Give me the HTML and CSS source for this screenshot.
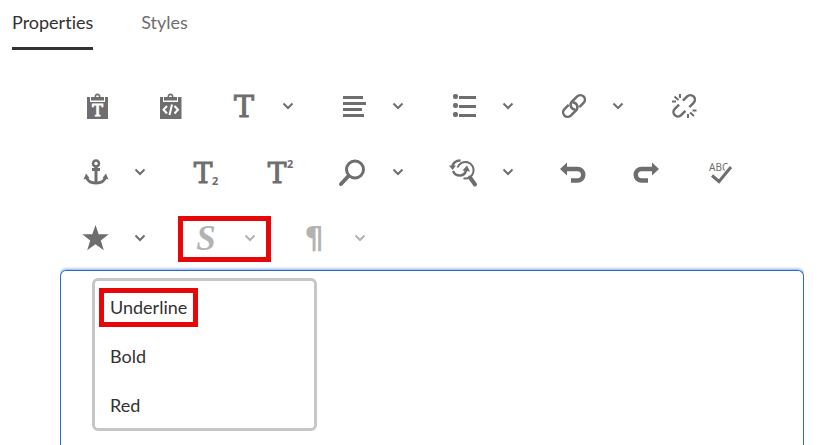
FILE: index.html
```html
<!DOCTYPE html>
<html lang="en">
<head>
  <meta charset="UTF-8">
  <meta name="viewport" content="width=device-width, initial-scale=1.0">
  <title>Text Editor</title>
  <link rel="stylesheet" href="styles.css">
</head>
<body>
  <nav class="tabs">
    <a class="tab active" href="#properties">Properties</a>
    <a class="tab" href="#styles">Styles</a>
  </nav>

  <main class="panel">
    <div class="toolbar">
      <div class="row">
        <button class="tool" aria-label="Paste as text">
          <svg class="icon" viewBox="0 0 28 28">
            <path fill="currentColor" d="M4 5h3v5h15V5h3v22H4z"/>
            <path fill="currentColor" d="M8 5h3.500a3 3.500 0 0 1 6 0H21v3.500H8zM13 5h3a1.500 1.800 0 0 0-3 0z"/>
            <text class="slab small" x="14.500" y="24">T</text>
          </svg>
        </button>
        <button class="tool" aria-label="Paste from code">
          <svg class="icon" viewBox="0 0 28 28">
            <path fill="currentColor" d="M3 5h3v5h15V5h3.500v22H3z"/>
            <path fill="currentColor" d="M7 5h3.500a3 3.500 0 0 1 6 0H20v3.500H7zM12 5h3a1.500 1.800 0 0 0-3 0z"/>
            <path class="cut" d="M10 14l-3.500 3.700L10 21.500M17.500 14l3.500 3.700-3.500 3.800M15 12.500l-2.500 10.500"/>
          </svg>
        </button>
        <button class="tool" aria-label="Format">
          <svg class="icon" viewBox="0 0 28 28"><text class="slab wide" x="13" y="25">T</text></svg>
          <svg class="chevron" viewBox="0 0 12 12"><path d="M1.500 3.500L6 8l4.500-4.500"/></svg>
        </button>
        <button class="tool" aria-label="Alignment">
          <svg class="icon" viewBox="0 0 28 28"><path fill="currentColor" d="M2 4h20v3H2zM2 10h23v3H2zM2 16h19v3H2zM2 22h21v3H2z"/></svg>
          <svg class="chevron" viewBox="0 0 12 12"><path d="M1.500 3.500L6 8l4.500-4.500"/></svg>
        </button>
        <button class="tool" aria-label="Lists">
          <svg class="icon" viewBox="0 0 28 28">
            <path fill="currentColor" d="M8 4h17v3H8zM8 13h17v3H8zM8 22h17v3H8z"/>
            <g fill="currentColor">
              <rect x="2" y="2" width="5" height="5" rx="2"/>
              <rect x="2" y="11" width="5" height="5" rx="2"/>
              <rect x="2" y="20" width="5" height="5" rx="2"/>
            </g>
          </svg>
          <svg class="chevron" viewBox="0 0 12 12"><path d="M1.500 3.500L6 8l4.500-4.500"/></svg>
        </button>
        <button class="tool" aria-label="Link">
          <svg class="icon" viewBox="0 0 28 28">
            <g class="line" transform="rotate(-45 13 14)">
              <path d="M10 9.500H4a4.500 4.500 0 0 0 0 9h7.500a4.500 4.500 0 0 0 3-7.800"/>
              <path d="M16 18.500h6a4.500 4.500 0 0 0 0-9h-7.500a4.500 4.500 0 0 0-3 7.800"/>
            </g>
          </svg>
          <svg class="chevron" viewBox="0 0 12 12"><path d="M1.500 3.500L6 8l4.500-4.500"/></svg>
        </button>
        <button class="tool" aria-label="Unlink">
          <svg class="icon" viewBox="0 0 28 28">
            <g class="line" transform="rotate(-45 13 14)">
              <path d="M10.500 9.500H4.500a4.500 4.500 0 0 0 0 9H10.500M16 18.500h6a4.500 4.500 0 0 0 0-9h-6"/>
            </g>
            <path class="line thin" d="M9 2v4M1 9.500h4M3.500 4.500L7.500 8M17 26v-4M25.500 18.500h-4M23 24l-4-3.500"/>
          </svg>
        </button>
      </div>

      <div class="row">
        <button class="tool" aria-label="Anchor">
          <svg class="icon" viewBox="0 0 28 28">
            <circle class="line" cx="13" cy="5.500" r="3"/>
            <path class="line bold" d="M13 9v15M9 11.500h8"/>
            <path class="line bold" d="M3.500 19c1 4 5 6 9.500 6s8.500-2 9.500-6"/>
            <path fill="currentColor" d="M3 15.500l-2.500 6 6-1.500zM23 15.500l2.500 6-6-1.500z"/>
          </svg>
          <svg class="chevron" viewBox="0 0 12 12"><path d="M1.500 3.500L6 8l4.500-4.500"/></svg>
        </button>
        <button class="tool" aria-label="Subscript">
          <svg class="icon" viewBox="0 0 28 28"><text class="slab" x="10" y="25">T</text><text class="digit" x="19" y="27">2</text></svg>
        </button>
        <button class="tool" aria-label="Superscript">
          <svg class="icon" viewBox="0 0 28 28"><text class="slab" x="10" y="25">T</text><text class="digit" x="20" y="10">2</text></svg>
        </button>
        <button class="tool" aria-label="Find">
          <svg class="icon" viewBox="0 0 28 28">
            <circle class="line bold" cx="14" cy="11.500" r="8.500"/>
            <path class="line heavy" d="M7.500 18L0 26"/>
          </svg>
          <svg class="chevron" viewBox="0 0 12 12"><path d="M1.500 3.500L6 8l4.500-4.500"/></svg>
        </button>
        <button class="tool" aria-label="Replace">
          <svg class="icon" viewBox="0 0 28 28">
            <path class="line thin" d="M6.500 9.500a8.300 8.300 0 1 1 6 10.800"/>
            <path class="line heavy" d="M19 19.500l5 7"/>
            <path class="line" d="M9.500 2.500C5 2.500 2 4.500 1.500 9M2 13c3 6.500 12 6 13-1"/>
            <path fill="currentColor" d="M-2 7.500h7L1.500 12zM11.500 12.500l4.500-5 3 6z"/>
          </svg>
          <svg class="chevron" viewBox="0 0 12 12"><path d="M1.500 3.500L6 8l4.500-4.500"/></svg>
        </button>
        <button class="tool" aria-label="Undo">
          <svg class="icon" viewBox="0 0 28 28">
            <path fill="none" stroke="currentColor" stroke-width="4.500" d="M5 11h11.500a5.500 5.500 0 0 1 0 11.500H10"/>
            <path fill="currentColor" d="M-1 11l7-6.500v13z"/>
          </svg>
        </button>
        <button class="tool" aria-label="Redo">
          <svg class="icon" viewBox="0 0 28 28">
            <path fill="none" stroke="currentColor" stroke-width="4.500" d="M18 11H6.500a5.500 5.500 0 0 0 0 11.500H13"/>
            <path fill="currentColor" d="M24 11l-7-6.500v13z"/>
          </svg>
        </button>
        <button class="tool" aria-label="Check spelling">
          <svg class="icon" viewBox="0 0 28 28">
            <text class="abc" x="0" y="13">ABC</text>
            <path fill="none" stroke="#fff" stroke-width="5" d="M10 23L21.500 9.500"/>
            <path class="line bold" d="M3 17.500l7 6L22 9"/>
          </svg>
        </button>
      </div>

      <div class="row">
        <button class="tool" aria-label="Favorites">
          <svg class="icon" viewBox="0 0 28 28"><path fill="currentColor" d="M12.500 1l3.200 9.200h10L17.800 16.500l3 9.800-8.300-6-8.300 6 3-9.800L-.7 10.200h10z"/></svg>
          <svg class="chevron" viewBox="0 0 12 12"><path d="M1.500 3.500L6 8l4.500-4.500"/></svg>
        </button>
        <button class="tool muted marked" aria-label="Text styles">
          <svg class="icon" viewBox="0 0 28 28"><text class="script" x="13" y="26">S</text></svg>
          <svg class="chevron" viewBox="0 0 12 12"><path d="M1.500 3.500L6 8l4.500-4.500"/></svg>
        </button>
        <button class="tool muted" aria-label="Paragraph">
          <svg class="icon" viewBox="0 0 28 28"><text class="pilcrow" x="11" y="24">¶</text></svg>
          <svg class="chevron" viewBox="0 0 12 12"><path d="M1.500 3.500L6 8l4.500-4.500"/></svg>
        </button>
      </div>
    </div>

    <div class="editor" role="textbox" aria-label="Text">
      <div class="menu">
        <button class="item"><span class="boxed">Underline</span></button>
        <button class="item"><span>Bold</span></button>
        <button class="item"><span>Red</span></button>
      </div>
    </div>
  </main>
</body>
</html>
```
FILE: styles.css
```css
* { box-sizing: border-box; }

body {
  display: flex;
  flex-direction: column;
  min-height: 100vh;
  margin: 0;
  background: #fff;
  color: #323232;
  font-family: Lato, "Noto Sans", sans-serif;
  font-size: 18px;
  font-variant-ligatures: none;
  line-height: 24px;
}

button {
  border: 0;
  padding: 0;
  background: none;
  color: inherit;
  font: inherit;
  cursor: pointer;
}

/* Tabs */
.tabs {
  display: flex;
  gap: 48px;
  padding: 0 12px;
}
.tab {
  padding: 10px 0 13px;
  border-bottom: 3px solid transparent;
  color: #6e6e6e;
  text-decoration: none;
}
.tab.active {
  border-color: #323232;
  color: #323232;
}

.panel {
  display: flex;
  flex: 1;
  flex-direction: column;
  padding: 34px 28px 0 60px;
}

/* Toolbar */
.toolbar {
  display: flex;
  flex-direction: column;
  gap: 22px;
  padding-bottom: 10px;
}
.row { display: flex; }
.tool {
  display: flex;
  align-items: center;
  gap: 23px;
  height: 44px;
  padding: 0 23px;
  color: #6e6e6e;
}
.tool:has(.chevron) { padding-right: 24px; }
.muted { color: #b3b3b3; }

.icon {
  width: 28px;
  height: 28px;
  overflow: visible;
}
.chevron {
  width: 12px;
  height: 12px;
  fill: none;
  stroke: currentColor;
  stroke-width: 2px;
}
.line {
  fill: none;
  stroke: currentColor;
  stroke-width: 2.5px;
}
.thin { stroke-width: 2px; }
.bold { stroke-width: 3px; }
.heavy {
  stroke-width: 4px;
  stroke-linecap: round;
}
.cut {
  fill: none;
  stroke: #fff;
  stroke-width: 2px;
}

/* Lettering inside the icons */
.icon text { fill: currentColor; }
.slab, .script, .pilcrow { text-anchor: middle; }
.slab {
  font: 28px "DejaVu Serif", serif;
  stroke: currentColor;
  stroke-width: 1px;
}
.icon .small {
  font-size: 16px;
  fill: #fff;
  stroke: #fff;
}
.wide { font-size: 30px; }
.digit { font: bold 11px "Noto Sans", sans-serif; }
.abc { font: 10px "Noto Sans", sans-serif; }
.script { font: italic bold 35px "Liberation Serif", serif; }
.pilcrow { font: bold 30px "DejaVu Sans", sans-serif; }

/* Red callouts */
.marked { position: relative; }
.marked::after {
  content: "";
  position: absolute;
  inset: 0 9px -2px 8px;
  border: 5px solid #e60808;
}
.boxed { position: relative; }
.boxed::after {
  content: "";
  position: absolute;
  inset: -8px -11px -9px;
  border: 5px solid #e60808;
}

/* Editing area */
.editor {
  flex: 1;
  padding: 7px 31px 14px;
  border: 1px solid #2d69c4;
  border-bottom: 0;
  border-radius: 6px 6px 0 0;
  box-shadow: 0 -1px 3px #7ea6e6;
  clip-path: inset(-4px 0 0 0);
}
.menu {
  display: flex;
  flex-direction: column;
  width: 225px;
  border: 3px solid #c6c6c6;
  border-radius: 6px;
}
.item {
  height: 49px;
  padding: 3px 15px 0;
  text-align: left;
}
```
